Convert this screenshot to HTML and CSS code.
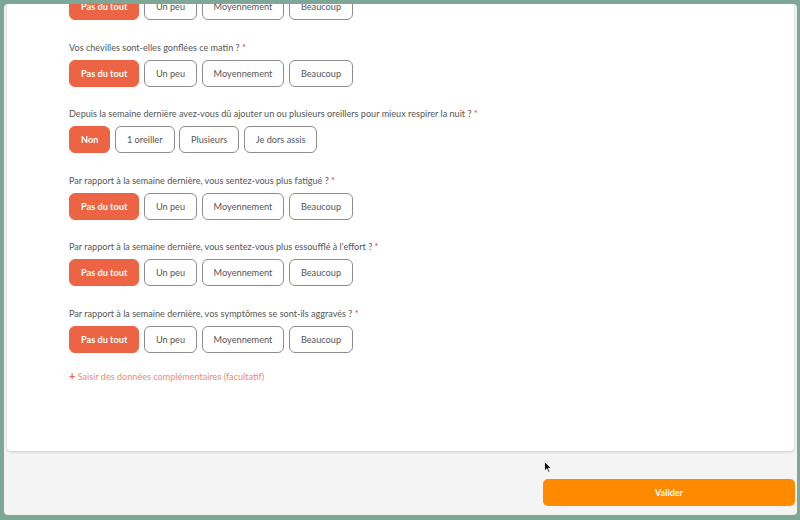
FILE: index.html
```html
<!DOCTYPE html>
<html lang="fr">
<head>
    <meta charset="UTF-8">
    <meta name="viewport" content="width=device-width, initial-scale=1.0">
    <title>Questionnaire</title>
    <link rel="stylesheet" href="styles.css">
</head>
<body>
    <div class="window">
        <div class="card">
            <div class="questions">
                <div class="question first">
                    <div class="options">
                        <button class="option selected">Pas du tout</button>
                        <button class="option">Un peu</button>
                        <button class="option">Moyennement</button>
                        <button class="option">Beaucoup</button>
                    </div>
                </div>
                <div class="question">
                    <div class="label">Vos chevilles sont-elles gonflées ce matin ? <span class="req">*</span></div>
                    <div class="options">
                        <button class="option selected">Pas du tout</button>
                        <button class="option">Un peu</button>
                        <button class="option">Moyennement</button>
                        <button class="option">Beaucoup</button>
                    </div>
                </div>
                <div class="question">
                    <div class="label">Depuis la semaine dernière avez-vous dû ajouter un ou plusieurs oreillers pour mieux respirer la nuit ? <span class="req">*</span></div>
                    <div class="options">
                        <button class="option selected">Non</button>
                        <button class="option">1 oreiller</button>
                        <button class="option">Plusieurs</button>
                        <button class="option">Je dors assis</button>
                    </div>
                </div>
                <div class="question">
                    <div class="label">Par rapport à la semaine dernière, vous sentez-vous plus fatigué ? <span class="req">*</span></div>
                    <div class="options">
                        <button class="option selected">Pas du tout</button>
                        <button class="option">Un peu</button>
                        <button class="option">Moyennement</button>
                        <button class="option">Beaucoup</button>
                    </div>
                </div>
                <div class="question">
                    <div class="label">Par rapport à la semaine dernière, vous sentez-vous plus essoufflé à l'effort ? <span class="req">*</span></div>
                    <div class="options">
                        <button class="option selected">Pas du tout</button>
                        <button class="option">Un peu</button>
                        <button class="option">Moyennement</button>
                        <button class="option">Beaucoup</button>
                    </div>
                </div>
                <div class="question">
                    <div class="label">Par rapport à la semaine dernière, vos symptômes se sont-ils aggravés ? <span class="req">*</span></div>
                    <div class="options">
                        <button class="option selected">Pas du tout</button>
                        <button class="option">Un peu</button>
                        <button class="option">Moyennement</button>
                        <button class="option">Beaucoup</button>
                    </div>
                </div>
            </div>
            <a class="more" href="#"><span class="plus">+</span> Saisir des données complémentaires (facultatif)</a>
        </div>
        <div class="footer">
            <button class="submit">Valider</button>
        </div>
        <svg class="cursor" width="8" height="12" viewBox="0 0 8 12">
            <path d="M0.5 0.5 L0.5 10 L2.8 7.8 L4.4 11.3 L5.8 10.7 L4.3 7.3 L7.3 7.3 Z" fill="#111" stroke="#fff" stroke-width="0.8"/>
        </svg>
    </div>
</body>
</html>
```

FILE: styles.css
```css
html, body {
    height: 100%;
}
body {
    margin: 0;
    padding: 4px 3px 5px 4px;
    box-sizing: border-box;
    background-color: #7fa797;
    font-family: Lato, 'Open Sans', 'Liberation Sans', Arial, sans-serif;
    overflow: hidden;
}
.window {
    position: relative;
    height: 100%;
    background-color: #f4f4f4;
    border-radius: 4px;
    overflow: hidden;
}
.card {
    height: 447px;
    margin: 0 3px 0 3px;
    padding: 0 0 0 62px;
    background-color: white;
    border-radius: 0 0 4px 4px;
    box-shadow: 0 1px 3px rgba(0,0,0,0.18);
    overflow: hidden;
}
.questions {
    margin-top: -11px;
}
.question {
    margin-bottom: 20.5px;
}
.label {
    font-size: 9.1px;
    line-height: 14px;
    color: #555;
    margin-bottom: 5px;
}
.req {
    color: #d9363e;
}
.options {
    display: flex;
    gap: 4.5px;
}
.option {
    height: 27px;
    padding: 0 11px;
    font-family: inherit;
    font-size: 9.2px;
    color: #555;
    background-color: white;
    border: 1px solid #8c8c8c;
    border-radius: 6px;
}
.option.selected {
    background-color: #ec6443;
    border-color: #ec6443;
    color: white;
    font-weight: bold;
}
.more {
    display: block;
    margin-top: -4px;
    font-size: 9.1px;
    line-height: 14px;
    color: #ef8a72;
    text-decoration: none;
}
.plus {
    font-weight: bold;
    font-size: 11px;
    color: #ec6443;
}
.footer {
    display: flex;
    justify-content: flex-end;
    padding: 28px 2px 0 0;
}
.submit {
    width: 252px;
    height: 27px;
    font-family: inherit;
    font-size: 9px;
    font-weight: bold;
    color: white;
    background-color: #ff8a00;
    border: none;
    border-radius: 5px;
}
.cursor {
    position: absolute;
    left: 540px;
    top: 457px;
}
```
